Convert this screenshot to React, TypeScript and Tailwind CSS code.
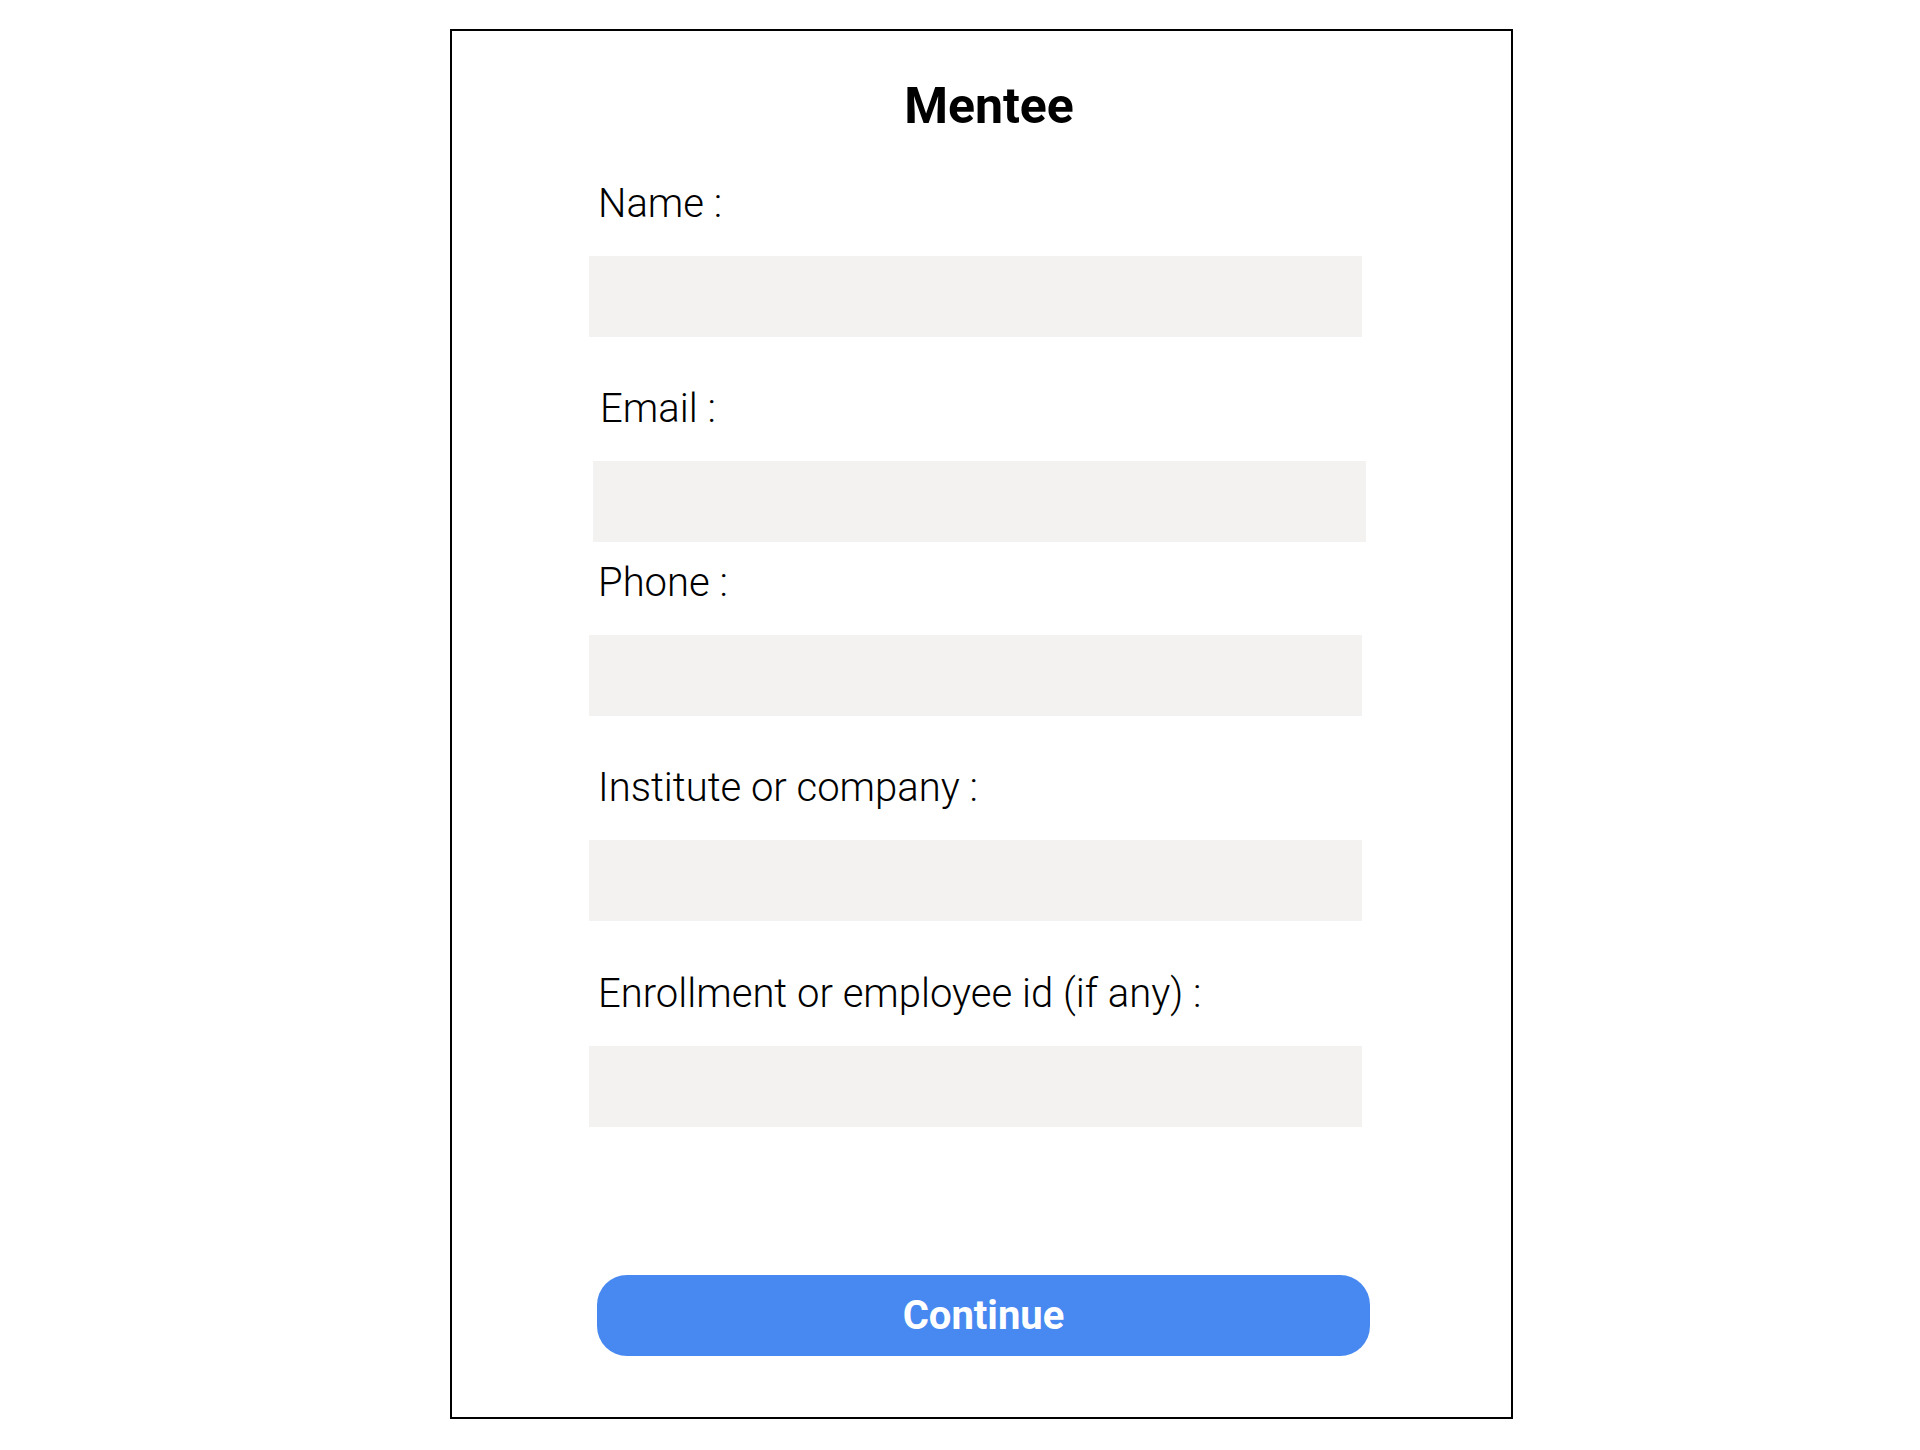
import React from 'react'

const fields = [
  { label: 'Name :', gapTop: 'mt-[53px]', labelShift: '', inputShift: '' },
  { label: 'Email :', gapTop: 'mt-[52px]', labelShift: 'pl-[2px]', inputShift: 'ml-[4px]' },
  { label: 'Phone :', gapTop: 'mt-[21px]', labelShift: '', inputShift: '' },
  { label: 'Institute or company :', gapTop: 'mt-[52px]', labelShift: '', inputShift: '' },
  { label: 'Enrollment or employee id (if any) :', gapTop: 'mt-[53px]', labelShift: '', inputShift: '' },
]

export default function App() {
  return (
    <div className="min-h-screen bg-white font-['Roboto',_'Liberation_Sans',_sans-serif] text-black">
      <div className="pt-[29px] pl-[450px]">
        <div className="w-[1063px] border-2 border-black flex flex-col pt-[50px] pb-[61px]">
          <h1 className="text-[50px] leading-none font-bold text-center pl-[15px]">Mentee</h1>

          <form className="flex flex-col pl-[137px]">
            {fields.map((f) => (
              <div key={f.label} className={`flex flex-col ${f.gapTop}`}>
                <label className={`text-[40px] leading-none font-light ${f.labelShift ? 'pl-[11px]' : 'pl-[9px]'}`}>
                  {f.label}
                </label>
                <input
                  type="text"
                  className={`mt-[32px] w-[773px] h-[81px] bg-[#f3f2f1] outline-none ${f.inputShift}`}
                />
              </div>
            ))}

            <button
              type="button"
              className="mt-[148px] ml-[8px] w-[773px] h-[81px] rounded-[30px] bg-[#4789f0] text-white text-[40px] leading-none font-bold"
            >
              Continue
            </button>
          </form>
        </div>
      </div>
    </div>
  )
}
